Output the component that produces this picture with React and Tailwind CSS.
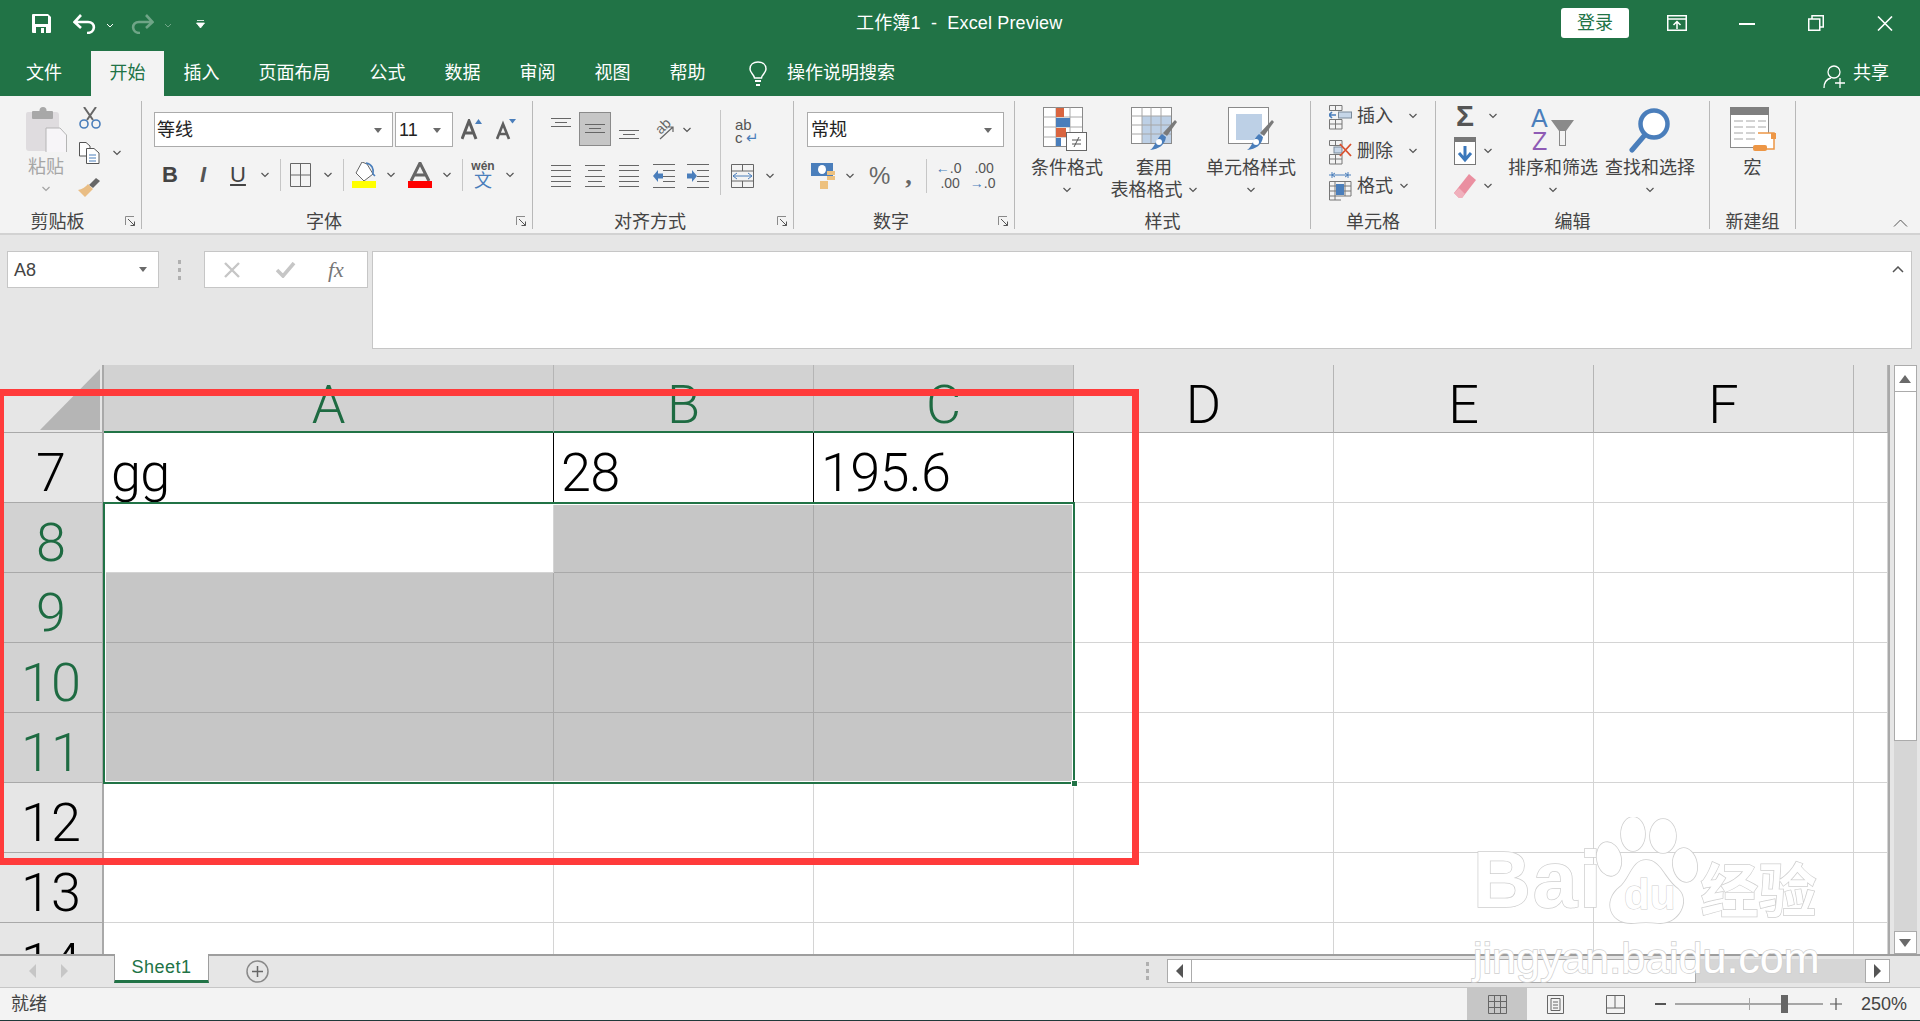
import React from "react";

const Chev = ({ className = "" }) => (
  <svg width="10" height="6" viewBox="0 0 10 6" className={"shrink-0 " + className}>
    <path d="M1.5 1 L5 4.5 L8.5 1" fill="none" stroke="#555" strokeWidth="1.2" />
  </svg>
);

const Caret = ({ className = "" }) => (
  <svg width="10" height="6" viewBox="0 0 10 6" className={className}>
    <path d="M1 0 H9 L5 5 Z" fill="#6a6a6a" />
  </svg>
);

const Sep = ({ className = "" }) => <div className={"w-px bg-[#c6c6c6] shrink-0 " + className} />;

const Launcher = () => (
  <svg width="11" height="11" viewBox="0 0 11 11" className="absolute right-[5px] top-[5px]">
    <path d="M0.5 9 V0.5 H9" fill="none" stroke="#8a8a8a" />
    <path d="M3 3 L9.5 9.5 M5.5 9.5 H9.5 V5.5" fill="none" stroke="#555" />
  </svg>
);

const Group = ({ className, label, launcher, children }) => (
  <div className={"h-[128px] shrink-0 flex flex-col border-r border-[#b8b8b8] " + className}>
    <div className="h-[110px]">{children}</div>
    <div className={"h-[18px] relative text-center text-[18px] leading-[22px] text-[#444] " + (launcher ? "pr-[26px]" : "")}>
      {label}
      {launcher && <Launcher />}
    </div>
  </div>
);

const Lines = ({ y, x }) => (
  <svg width="20" height="22" viewBox="0 0 20 22">
    {y.map((v, i) => (
      <rect key={i} x={x[i]} y={v} width={20 - x[i] * 2} height="1" fill="#666" />
    ))}
  </svg>
);

const AlignV = ({ className = "" }) => (
  <svg width="20" height="10" viewBox="0 0 20 10" className={className}>
    <path d="M0 0.5 H20 M4 4.5 H16 M0 8.5 H20" stroke="#666" />
  </svg>
);

const Indent = ({ flip }) => (
  <svg width="22" height="24" viewBox="0 0 22 24">
    <path d="M0 .5 H22 M10 6.5 H22 M10 12.5 H22 M10 17.5 H22 M0 23.5 H22" stroke="#666" />
    <path d={flip ? "M0 9.5 H5 V6 L10 12 L5 18 V14.5 H0 Z" : "M10 9.5 H5 V6 L0 12 L5 18 V14.5 H10 Z"} fill="#4a7ebb" />
  </svg>
);

const SmallCellIcon = ({ kind }) => (
  <svg width="23" height="28" viewBox="0 0 23 28">
    <g fill="none" stroke="#777">
      <path d="M0.5 3.5 H13 V8.5 H0.5 Z M6.5 3.5 V8.5 M0.5 17.5 H13 V27 H0.5 Z M6.5 17.5 V27 M0.5 22 H13" />
    </g>
    {kind === "ins" && (
      <>
        <rect x="9.5" y="10" width="13" height="6" fill="#c6d6e8" stroke="#7a8a9a" />
        <path d="M0 13 H7 M3 10 L0 13 L3 16" fill="none" stroke="#4a7ebb" strokeWidth="1.6" />
      </>
    )}
    {kind === "del" && (
      <>
        <rect x="5" y="10" width="8" height="6" fill="#c6d6e8" stroke="#7a8a9a" />
        <path d="M11 7 L22 19 M22 7 L11 19" stroke="#d9502e" strokeWidth="1.8" />
      </>
    )}
  </svg>
);

const FormatIcon = () => (
  <svg width="23" height="30" viewBox="0 0 23 30">
    <path d="M0 4 H22 M3 1 V7 M19 1 V7 M3 4 L6 2 M3 4 L6 6 M19 4 L16 2 M19 4 L16 6" fill="none" stroke="#4a7ebb" />
    <path d="M.5 10.5 H22 V25 H.5 Z M.5 15 H22 M.5 20 H22 M6 10.5 V29 M16 10.5 V25 M.5 25 V29 H12" fill="none" stroke="#777" />
    <rect x="7" y="13" width="8" height="11" fill="#4a7ebb" />
  </svg>
);

const TableBrush = ({ cols }) => (
  <svg width="46" height="44" viewBox="0 0 46 44">
    <rect x="0.5" y="0.5" width="40" height="36" fill="#fff" stroke="#8a8a8a" />
    <rect x={cols ? 11 : 8} y={cols ? 9 : 7} width={cols ? 29 : 26} height={cols ? 27 : 26} fill="#bdd0e6" />
    {cols && <path d="M11 .5 V36 M20 .5 V36 M30 .5 V36 M.5 9 H40 M.5 18 H40 M.5 27 H40" stroke="#a6a6a6" fill="none" />}
    <path d="M44 13 L46 15 L36 29 L32 26 Z" fill="#7a7a7a" />
    <path d="M31 27 L35 30 C34 38 28 42 19 43 C24 40 25 32 31 27 Z" fill="#4a7ebb" />
    <circle cx="28" cy="35" r="3" fill="#fff" />
  </svg>
);

const Header = () => (
  <div className="h-[96px] bg-[#217346] text-white shrink-0 flex flex-col">
    <div className="h-[51px] flex relative">
      {/* quick access */}
      <div className="flex items-start pt-[14px] pl-[32px]">
        <svg width="19" height="19" viewBox="0 0 19 19">
          <path d="M0 1 Q0 0 1 0 H16 L19 3 V18 Q19 19 18 19 H1 Q0 19 0 18 Z" fill="#fff" />
          <rect x="3" y="2" width="13" height="8" fill="#217346" />
          <rect x="4" y="13" width="10" height="6" fill="#217346" />
          <rect x="9" y="14" width="3" height="5" fill="#fff" />
        </svg>
        <svg width="23" height="20" viewBox="0 0 23 20" className="ml-[22px]">
          <path d="M2 8 H15 C23 8 23 19 14 19 M8 1 L1.5 8 L8 14" fill="none" stroke="#fff" strokeWidth="2.6" />
        </svg>
        <svg width="8" height="5" viewBox="0 0 8 5" className="ml-[10px] mt-[9px]">
          <path d="M1 1 L4 4 L7 1" fill="none" stroke="#fff" />
        </svg>
        <svg width="23" height="20" viewBox="0 0 23 20" className="ml-[17px]">
          <path d="M21 8 H8 C0 8 0 19 9 19 M15 1 L21.5 8 L15 14" fill="none" stroke="#6fa587" strokeWidth="2.6" />
        </svg>
        <svg width="8" height="5" viewBox="0 0 8 5" className="ml-[10px] mt-[9px]">
          <path d="M1 1 L4 4 L7 1" fill="none" stroke="#6fa587" />
        </svg>
        <svg width="9" height="9" viewBox="0 0 9 9" className="ml-[24px] mt-[6px]">
          <path d="M1 .5 H8 M0.5 3 H8.5 L4.5 8 Z" fill="#fff" stroke="#fff" strokeWidth=".8" />
        </svg>
      </div>
      <div className="absolute left-[856px] top-[11px] text-[18px] leading-[24px] whitespace-pre tracking-[0.15px]">工作簿1  -  Excel Preview</div>
      <div className="ml-auto flex items-start">
        <div className="mt-[8px] w-[68px] h-[30px] bg-white rounded-[3px] text-[#217346] text-[18px] leading-[30px] text-center">登录</div>
        <svg width="20" height="16" viewBox="0 0 20 16" className="ml-[38px] mt-[15px]">
          <path d="M.75 .75 H19.25 V15.25 H.75 Z M.75 4 H19.25" fill="none" stroke="#fff" strokeWidth="1.5" />
          <path d="M10 14 V7 M6.5 10 L10 6.5 L13.5 10" fill="none" stroke="#fff" strokeWidth="1.5" />
        </svg>
        <div className="ml-[52px] mt-[23px] w-[16px] h-[2px] bg-white" />
        <svg width="16" height="16" viewBox="0 0 16 16" className="ml-[53px] mt-[15px]">
          <path d="M.75 4 H11.75 V15.25 H.75 Z M4 4 V.75 H15.25 V12 H11.75" fill="none" stroke="#fff" strokeWidth="1.5" />
        </svg>
        <svg width="16" height="15" viewBox="0 0 16 15" className="ml-[53px] mt-[16px] mr-[27px]">
          <path d="M1 .5 L15 14.5 M15 .5 L1 14.5" stroke="#fff" strokeWidth="1.6" />
        </svg>
      </div>
    </div>
    <div className="h-[45px] flex items-stretch text-[18px] pl-[7px]">
      <div className="px-[19px] mr-[10px] leading-[45px]">文件</div>
      <div className="px-[18.5px] w-[73px] bg-[#f3f3f3] text-[#217346] leading-[45px]">开始</div>
      {["插入", "页面布局", "公式", "数据", "审阅", "视图", "帮助"].map((t) => (
        <div key={t} className="px-[19.5px] leading-[45px]">{t}</div>
      ))}
      <svg width="18" height="26" viewBox="0 0 18 26" className="ml-[24px] mt-[10px]">
        <path d="M5.5 17 C5 13 1 12 1 8 C1 3.5 4.5 1 9 1 C13.5 1 17 3.5 17 8 C17 12 13 13 12.5 17 Z" fill="none" stroke="#fff" strokeWidth="1.5" />
        <path d="M6 20 H12 M7 24 H11" stroke="#fff" strokeWidth="2" />
      </svg>
      <div className="ml-[20px] leading-[45px]">操作说明搜索</div>
      <div className="ml-auto flex mr-[31px]">
        <svg width="23" height="24" viewBox="0 0 23 24" className="mt-[14px]">
          <circle cx="11" cy="7" r="6" fill="none" stroke="#fff" strokeWidth="1.3" />
          <path d="M1 23 C1 17 4 14 8 13 M17 13 V23 M12 18 H22" fill="none" stroke="#fff" strokeWidth="1.3" />
        </svg>
        <div className="ml-[7px] leading-[45px]">共享</div>
      </div>
    </div>
  </div>
);

const Ribbon = () => (
  <div className="h-[139px] shrink-0 bg-[#f3f3f3] border-b-2 border-[#d2d2d2] flex pt-[5px] text-[#444]">
    <Group className="w-[142px]" label="剪贴板" launcher>
      <div className="flex pl-[24px] pt-[6px]">
        <div className="w-[44px] flex flex-col items-center">
          <svg width="41" height="45" viewBox="0 0 41 45">
            <path d="M2 5 H30 Q33 5 33 8 V41 Q33 44 30 44 H3 Q0 44 0 41 V7 Q0 5 2 5 Z" fill="#dfdcdf" />
            <rect x="6" y="4" width="21" height="8" rx="1" fill="#a8a8a8" />
            <circle cx="17" cy="3.5" r="3.5" fill="#a8a8a8" />
            <path d="M20 21 H34 L40.5 28 V48 H20 Z" fill="#f7f5f8" stroke="#b5b5b5" />
          </svg>
          <div className="text-[18px] leading-[22px] mt-[4px] text-[#a6a6a6]">粘贴</div>
          <Chev className="mt-[8px] opacity-50" />
        </div>
        <div className="ml-[9px] flex flex-col">
          <svg width="24" height="22" viewBox="0 0 24 22" className="ml-[1px]">
            <path d="M6 0 L15 13 M18 0 L9 13" stroke="#666" strokeWidth="2" />
            <circle cx="6" cy="17" r="4" fill="none" stroke="#4a7ebb" strokeWidth="1.6" />
            <circle cx="18" cy="17" r="4" fill="none" stroke="#4a7ebb" strokeWidth="1.6" />
          </svg>
          <div className="flex items-center mt-[13px]">
            <svg width="21" height="22" viewBox="0 0 21 22" className="ml-[2px]">
              <path d="M.5 .5 H7 L11 4 V14 H.5 Z" fill="#fff" stroke="#555" />
              <path d="M7.5 6.5 H15 L20 11 V21.5 H7.5 Z" fill="#fff" stroke="#555" />
              <path d="M10 13 H17 M10 16 H17 M10 19 H17" stroke="#4a7ebb" />
            </svg>
            <Chev className="ml-[12px]" />
          </div>
          <svg width="24" height="21" viewBox="0 0 24 21" className="mt-[13px]">
            <path d="M19 1 L23 4 L16 11 L12 8 Z" fill="#666" />
            <path d="M11 7 L16 12 L8 20 L1 13 Q7 12 11 7 Z" fill="#e9bd84" />
          </svg>
        </div>
      </div>
    </Group>

    <Group className="w-[391px]" label="字体" launcher>
      <div className="flex items-center pt-[11px] pl-[12px] h-[46px]">
        <div className="w-[239px] h-[35px] bg-white border border-[#ababab] flex items-center px-[2px] pt-[2px] text-[18px] text-[#222]">
          等线<Caret className="ml-auto mr-[7px]" />
        </div>
        <div className="ml-[2px] w-[58px] h-[35px] bg-white border border-[#ababab] flex items-center px-[3px] pt-[2px] text-[18px] text-[#222]">
          11<Caret className="ml-auto mr-[7px]" />
        </div>
        <svg width="21" height="21" viewBox="0 0 21 21" className="ml-[8px]">
          <path d="M1 20 L8 2 L15 20 M4 14 H12" fill="none" stroke="#5e5e5e" strokeWidth="3" />
          <path d="M14 5 L17.5 0 L21 5 Z" fill="#4a7ebb" />
        </svg>
        <svg width="20" height="21" viewBox="0 0 20 21" className="ml-[14px]">
          <path d="M1 20 L7 5 L13 20 M3.5 15 H10.5" fill="none" stroke="#5e5e5e" strokeWidth="2.6" />
          <path d="M13 0 H20 L16.5 4.5 Z" fill="#4a7ebb" />
        </svg>
      </div>
      <div className="flex items-center mt-[16px] pl-[16px] h-[24px] text-[22px] leading-[24px] text-[#444]">
        <div className="w-[24px] text-center font-bold">B</div>
        <div className="ml-[9px] w-[24px] text-center italic font-bold text-[#555]">I</div>
        <div className="ml-[11px] w-[24px] text-center underline">U</div>
        <Chev className="ml-[10px]" />
        <Sep className="ml-[10px] h-[32px]" />
        <svg width="21" height="24" viewBox="0 0 21 24" className="ml-[9px]">
          <path d="M.5 .5 H20.5 V23.5 H.5 Z M10.5 .5 V23.5 M.5 12 H20.5" fill="none" stroke="#666" />
        </svg>
        <Chev className="ml-[12px]" />
        <Sep className="ml-[10px] h-[32px]" />
        <svg width="24" height="26" viewBox="0 0 24 26" className="ml-[8px]">
          <path d="M10 0 L15 2 L21 12 L12 19 L4 11 Z" fill="#fff" stroke="#666" />
          <path d="M14 1 C20 2 22 7 21 12 L23 14" fill="none" stroke="#4a7ebb" strokeWidth="1.6" />
          <rect x="0" y="19" width="24" height="7" fill="#ffff00" />
        </svg>
        <Chev className="ml-[10px]" />
        <svg width="24" height="26" viewBox="0 0 24 26" className="ml-[12px]">
          <path d="M3 19 L12 1 L21 19 M6 13 H18" fill="none" stroke="#666" strokeWidth="3" />
          <rect x="0" y="19" width="24" height="7" fill="#ff0000" />
        </svg>
        <Chev className="ml-[10px]" />
        <Sep className="ml-[10px] h-[32px]" />
        <div className="ml-[10px] w-[20px] flex flex-col items-center">
          <div className="text-[12px] leading-[12px] font-bold text-[#555]">wén</div>
          <div className="text-[18px] leading-[18px] text-[#4a7ebb]">文</div>
        </div>
        <Chev className="ml-[12px]" />
      </div>
    </Group>

    <Group className="w-[261px]" label="对齐方式" launcher>
      <div className="flex pt-[9px]">
        <div className="w-[187px] shrink-0">
          <div className="flex items-start pl-[18px] h-[38px] pt-[2px]">
            <AlignV className="mt-[6px]" />
            <div className="ml-[8px] w-[32px] h-[34px] bg-[#c6c6c6] border border-[#8a8a8a] flex items-center justify-center">
              <AlignV />
            </div>
            <AlignV className="ml-[8px] mt-[18px]" />
            <div className="ml-[15px] mt-[6px] w-[20px] h-[24px] relative">
              <span className="absolute left-[1px] top-[0px] text-[14px] leading-[16px] text-[#666] -rotate-45 [font-family:'Liberation_Sans',sans-serif]">ab</span>
              <svg width="20" height="24" viewBox="0 0 20 24" className="absolute left-0 top-0">
                <path d="M6 21 L19 9 M14 9 H19 V14" fill="none" stroke="#666" strokeWidth="1.2" />
              </svg>
            </div>
            <Chev className="ml-[8px] mt-[15px]" />
          </div>
          <div className="flex items-center pl-[18px] mt-[16px]">
            <Lines y={[0, 5, 11, 16, 21]} x={[0, 0, 0, 0, 0]} />
            <div className="ml-[14px]"><Lines y={[0, 5, 11, 16, 21]} x={[0, 3, 0, 3, 0]} /></div>
            <div className="ml-[14px]"><Lines y={[0, 5, 11, 16, 21]} x={[0, 0, 0, 0, 0]} /></div>
            <div className="ml-[14px]"><Indent /></div>
            <div className="ml-[12px]"><Indent flip /></div>
          </div>
        </div>
        <Sep className="h-[85px]" />
        <div className="pl-[10px]">
          <div className="h-[38px] pl-[4px] pt-[8px] text-[15px] leading-[13px] text-[#555] [font-family:'Liberation_Sans',sans-serif]">
            <div>ab</div>
            <div>c<span className="text-[#4a7ebb] ml-[3px]">↵</span></div>
          </div>
          <div className="flex items-center mt-[16px]">
            <svg width="23" height="24" viewBox="0 0 23 24">
              <path d="M.5 .5 H22.5 V23.5 H.5 Z M.5 7 H22.5 M.5 17 H22.5 M11.5 .5 V7 M11.5 17 V23.5" fill="none" stroke="#666" />
              <path d="M2 12 H21 M6 9 L2 12 L6 15 M17 9 L21 12 L17 15" fill="none" stroke="#4a7ebb" />
            </svg>
            <Chev className="ml-[11px]" />
          </div>
        </div>
      </div>
    </Group>

    <Group className="w-[221px]" label="数字" launcher>
      <div className="pt-[11px] pl-[13px]">
        <div className="w-[197px] h-[35px] bg-white border border-[#ababab] flex items-center px-[3px] pt-[2px] text-[18px] text-[#222]">
          常规<Caret className="ml-auto mr-[7px]" />
        </div>
      </div>
      <div className="flex items-center pl-[17px] mt-[16px] h-[26px]">
        <svg width="24" height="26" viewBox="0 0 24 26">
          <rect x="0" y="0" width="22" height="13" fill="#4a7ebb" />
          <ellipse cx="11" cy="6.5" rx="4" ry="4.5" fill="#fff" />
          <path d="M16 8 H24 V12 H16 Z M16 13 H24 V17 H16 Z M9 18 H17 V22 H9 Z M9 22 H17 V26 H9 Z" fill="#edc17f" />
        </svg>
        <Chev className="ml-[10px]" />
        <div className="ml-[14px] text-[24px] leading-[26px] text-[#666] [font-family:'Liberation_Sans',sans-serif]">%</div>
        <div className="ml-[15px] text-[26px] leading-[26px] font-bold text-[#666] [font-family:'Liberation_Serif',serif]">,</div>
        <Sep className="ml-[14px] h-[34px]" />
        <div className="ml-[9px] w-[24px] text-[14px] leading-[15px] text-[#555] text-right [font-family:'Liberation_Sans',sans-serif]">
          <div><span className="text-[#4a7ebb] font-bold">←</span>.0</div>
          <div>.00</div>
        </div>
        <div className="ml-[10px] w-[24px] text-[14px] leading-[15px] text-[#555] text-right [font-family:'Liberation_Sans',sans-serif]">
          <div>.00</div>
          <div><span className="text-[#4a7ebb] font-bold">→</span>.0</div>
        </div>
      </div>
    </Group>

    <Group className="w-[296px]" label="样式">
      <div className="flex pt-[6px] pl-[8px] text-[18px] leading-[22px] text-[#444]">
        <div className="w-[88px] flex flex-col items-center">
          <svg width="48" height="44" viewBox="0 0 48 44">
            <rect x=".5" y=".5" width="39" height="39" fill="#fff" stroke="#8a8a8a" />
            <path d="M13 .5 V39 M27 .5 V39 M.5 10 H39 M.5 20 H39 M.5 30 H39" stroke="#aaa" fill="none" />
            <rect x="13" y="1" width="8" height="9" fill="#d96540" />
            <rect x="13" y="11" width="14" height="9" fill="#4a7ebb" />
            <rect x="13" y="21" width="10" height="9" fill="#d96540" />
            <rect x="13" y="31" width="5" height="8" fill="#4a7ebb" />
            <rect x="23.5" y="25.5" width="20" height="18" fill="#fff" stroke="#666" />
            <path d="M29 33 H38 M29 37 H38 M36 30 L31 40" stroke="#555" />
          </svg>
          <div className="mt-[6px]">条件格式</div>
          <div className="h-[22px] flex items-center"><Chev /></div>
        </div>
        <div className="w-[86px] flex flex-col items-center">
          <TableBrush cols />
          <div className="mt-[6px]">套用</div>
          <div className="flex items-center whitespace-nowrap">表格格式<Chev className="ml-[5px]" /></div>
        </div>
        <div className="ml-[6px] w-[96px] flex flex-col items-center">
          <TableBrush />
          <div className="mt-[6px] whitespace-nowrap">单元格样式</div>
          <div className="h-[22px] flex items-center"><Chev /></div>
        </div>
      </div>
    </Group>

    <Group className="w-[125px]" label="单元格">
      <div className="pl-[18px] text-[18px] leading-[30px] text-[#444]">
        <div className="flex items-center h-[30px]">
          <SmallCellIcon kind="ins" />
          <span className="ml-[5px]">插入</span>
          <Chev className="ml-[15px]" />
        </div>
        <div className="flex items-center h-[30px] mt-[5px]">
          <SmallCellIcon kind="del" />
          <span className="ml-[5px]">删除</span>
          <Chev className="ml-[15px]" />
        </div>
        <div className="flex items-center h-[30px] mt-[5px]">
          <FormatIcon />
          <span className="ml-[5px]">格式</span>
          <Chev className="ml-[6px]" />
        </div>
      </div>
    </Group>

    <Group className="w-[274px]" label="编辑">
      <div className="flex text-[18px] leading-[22px] text-[#444]">
        <div className="pl-[18px] w-[70px]">
          <div className="flex items-center h-[30px]">
            <div className="w-[22px] text-center text-[30px] leading-[30px] font-bold text-[#555] [font-family:'Liberation_Sans',sans-serif]">Σ</div>
            <Chev className="ml-[12px]" />
          </div>
          <div className="flex items-center h-[30px] mt-[5px]">
            <svg width="22" height="28" viewBox="0 0 22 28">
              <rect x=".5" y=".5" width="21" height="27" fill="#fff" stroke="#777" />
              <rect x="0" y="0" width="22" height="5" fill="#777" />
              <path d="M11 9 V22 M5 16 L11 23 L17 16" fill="none" stroke="#3a77bb" strokeWidth="3" />
            </svg>
            <Chev className="ml-[7px]" />
          </div>
          <div className="flex items-center h-[30px] mt-[5px]">
            <svg width="22" height="24" viewBox="0 0 22 24">
              <path d="M15 0 L22 6 L8 24 H5 L0 19 Z" fill="#ea8fa0" />
              <path d="M0 19 L5 14 L11 20 L8 24 H5 Z" fill="#f0b0bc" />
            </svg>
            <Chev className="ml-[7px]" />
          </div>
        </div>
        <div className="w-[94px] pt-[6px] flex flex-col items-center">
          <div className="w-[44px] h-[46px] shrink-0 relative text-[25px] leading-[23px] [font-family:'Liberation_Sans',sans-serif]">
            <div className="text-[#4a7ebb]">A</div>
            <div className="text-[#8e5bb5] ml-[1px]">Z</div>
            <svg width="44" height="46" viewBox="0 0 44 46" className="absolute left-0 top-0">
              <path d="M20 13 H43 L35 24 V39 H28 V24 Z" fill="#8a8a8a" />
              <path d="M29 24 H34 V38 H29 Z" fill="#f3f3f3" />
            </svg>
          </div>
          <div className="mt-[4px] whitespace-nowrap">排序和筛选</div>
          <div className="h-[22px] flex items-center"><Chev /></div>
        </div>
        <div className="ml-[3px] w-[94px] pt-[6px] flex flex-col items-center">
          <svg width="42" height="46" viewBox="0 0 42 46" className="shrink-0">
            <circle cx="25" cy="17" r="13.5" fill="#fff" stroke="#4a7ebb" strokeWidth="4.5" />
            <path d="M15 29 L3 43" stroke="#4a7ebb" strokeWidth="5" strokeLinecap="round" />
          </svg>
          <div className="mt-[4px] whitespace-nowrap">查找和选择</div>
          <div className="h-[22px] flex items-center"><Chev /></div>
        </div>
      </div>
    </Group>

    <Group className="w-[86px]" label="新建组">
      <div className="pt-[6px] flex flex-col items-center text-[18px] leading-[22px]">
        <svg width="46" height="44" viewBox="0 0 46 44">
          <rect x=".5" y=".5" width="38" height="40" fill="#fff" stroke="#8a8a8a" />
          <rect x="0" y="0" width="39" height="8" fill="#7f7f7f" />
          <path d="M4 14 H13 M16 14 H25 M28 14 H36 M4 20 H13 M16 20 H25 M28 20 H36 M4 26 H13 M16 26 H25 M4 32 H13 M16 32 H25" stroke="#a6a6a6" />
          <path d="M28 26 H44 V42 H25" fill="#fff" stroke="#ed9645" strokeWidth="1.5" />
          <rect x="23" y="38" width="14" height="6" rx="2" fill="#ed9645" />
          <rect x="41" y="26" width="5" height="6" fill="#ed9645" />
        </svg>
        <div className="mt-[6px]">宏</div>
      </div>
    </Group>

    <div className="flex-1 flex justify-end items-end pr-[12px] pb-[6px]">
      <svg width="15" height="8" viewBox="0 0 15 8">
        <path d="M1 7.5 L7.5 1 L14 7.5" fill="none" stroke="#555" />
      </svg>
    </div>
  </div>
);

const FormulaBar = () => (
  <div className="h-[130px] shrink-0 bg-[#e6e6e6] flex items-start pt-[16px] pl-[7px] text-[18px] text-[#444]">
    <div className="w-[152px] h-[37px] bg-white border border-[#c6c6c6] flex items-center pl-[6px] pr-[10px] pt-[1px]">
      A8<Caret className="ml-auto" />
    </div>
    <div className="ml-[19px] mt-[9px] flex flex-col gap-[4px]">
      <div className="w-[3px] h-[4px] bg-[#b0b0b0]" />
      <div className="w-[3px] h-[4px] bg-[#b0b0b0]" />
      <div className="w-[3px] h-[4px] bg-[#b0b0b0]" />
    </div>
    <div className="ml-[23px] w-[164px] h-[37px] bg-white border border-[#c6c6c6] flex items-center">
      <svg width="18" height="18" viewBox="0 0 18 18" className="ml-[18px]">
        <path d="M2 2 L16 16 M16 2 L2 16" stroke="#c6c6c6" strokeWidth="2.4" />
      </svg>
      <svg width="20" height="16" viewBox="0 0 20 16" className="ml-[35px]">
        <path d="M1 8 L7 14 L18 1" fill="none" stroke="#c6c6c6" strokeWidth="3.6" />
      </svg>
      <div className="ml-[32px] text-[22px] italic text-[#777] [font-family:'Liberation_Serif',serif]">fx</div>
    </div>
    <div className="ml-[4px] w-[1540px] h-[98px] bg-white border border-[#c6c6c6] flex justify-end pt-[14px] pr-[7px]">
      <svg width="12" height="7" viewBox="0 0 12 7">
        <path d="M1 6 L6 1 L11 6" fill="none" stroke="#555" strokeWidth="1.5" />
      </svg>
    </div>
  </div>
);

const colClass = ["w-[450px]", "w-[260px]", "w-[260px]", "w-[260px]", "w-[260px]", "w-[260px]", "flex-1"];
const bigText = "[font-family:Roboto,sans-serif] font-light text-[54px]";

const Row = ({ n, cells = {}, selected }) => (
  <div className="h-[70px] flex shrink-0">
    <div className={"w-[104px] shrink-0 border-b border-r-2 text-center leading-[70px] pt-[5px] " + bigText + (selected ? " bg-[#d2d2d2] text-[#1e6b42] border-[#a9a9a9]" : " bg-[#e6e6e6] text-black border-[#a9a9a9]")}>
      {n}
    </div>
    {colClass.map((w, i) => {
      const gray = selected && i < 3 && !(n === 8 && i === 0);
      const black = n === 7 && i < 3;
      return (
        <div
          key={i}
          className={
            "shrink-0 border-r border-b pl-[7px] leading-[70px] text-black pt-[5px] tracking-[-0.7px] " + bigText + " " + w + " " +
            (gray ? "bg-[#c6c6c6] border-[#a9a9a9]" : black ? "bg-white border-r-black border-b-[#d4d4d4]" : "bg-white border-[#d4d4d4]")
          }
        >
          {cells[i]}
        </div>
      );
    })}
  </div>
);

const Sheet = () => (
  <div className="h-[589px] shrink-0 flex bg-[#e6e6e6]">
    <div className="w-[1890px] shrink-0 border-r-2 border-[#a9a9a9] relative overflow-hidden">
      <div className="h-[68px] flex">
        <div className="w-[104px] h-[68px] bg-[#e6e6e6] border-b border-r-2 border-[#a9a9a9] shrink-0">
          <svg width="102" height="67" viewBox="0 0 102 67">
            <path d="M100 4 V65 H40 Z" fill="#b5b5b5" />
          </svg>
        </div>
        {["A", "B", "C", "D", "E", "F", ""].map((c, i) => (
          <div
            key={i}
            className={
              "border-r text-center leading-[68px] pt-[6px] shrink-0 " + bigText + " " + colClass[i] + " " +
              (i < 3 ? "bg-[#d2d2d2] text-[#1e6b42] border-r-[#b5b5b5] border-b-2 border-b-[#217346]" : "bg-[#e6e6e6] text-black border-r-[#b5b5b5] border-b border-b-[#a9a9a9]")
            }
          >
            {c}
          </div>
        ))}
      </div>
      <Row n={7} cells={{ 0: "gg", 1: "28", 2: "195.6" }} />
      <Row n={8} selected />
      <Row n={9} selected />
      <Row n={10} selected />
      <Row n={11} selected />
      <Row n={12} />
      <Row n={13} />
      <Row n={14} />
      {/* selection outline */}
      <div className="absolute left-[103px] top-[137px] w-[972px] h-[282px] border-2 border-[#217346] pointer-events-none [box-shadow:inset_0_0_0_1px_#fff]" />
      <div className="absolute left-[1071px] top-[415px] w-[7px] h-[7px] bg-[#217346] border border-white" />
    </div>
    <div className="flex-1 flex flex-col items-center">
      <div className="w-[23px] h-[27px] bg-white border border-[#ababab] flex items-center justify-center">
        <svg width="12" height="8" viewBox="0 0 12 8"><path d="M6 0 L12 8 H0 Z" fill="#6a6a6a" /></svg>
      </div>
      <div className="w-[23px] flex-1 bg-[#d6d6d6] flex flex-col">
        <div className="h-[349px] bg-white border-x border-b border-[#ababab]" />
      </div>
      <div className="w-[23px] h-[23px] bg-white border border-[#ababab] flex items-center justify-center">
        <svg width="12" height="8" viewBox="0 0 12 8"><path d="M0 0 H12 L6 8 Z" fill="#6a6a6a" /></svg>
      </div>
    </div>
  </div>
);

const SheetBar = () => (
  <div className="h-[33px] shrink-0 bg-[#e6e6e6] border-t-2 border-[#9e9e9e] flex items-start">
    <svg width="7" height="14" viewBox="0 0 7 14" className="ml-[29px] mt-[8px]"><path d="M7 0 V14 L0 7 Z" fill="#c6c6c6" /></svg>
    <svg width="7" height="14" viewBox="0 0 7 14" className="ml-[25px] mt-[8px]"><path d="M0 0 V14 L7 7 Z" fill="#c6c6c6" /></svg>
    <div className="ml-[46px] w-[95px] h-[29px] bg-white border-x border-[#9e9e9e] border-b-[3px] border-b-[#217346] -mt-[2px] text-[#217346] text-[18px] leading-[26px] text-center tracking-[0.5px]">Sheet1</div>
    <svg width="23" height="23" viewBox="0 0 23 23" className="ml-[37px] mt-[4px]">
      <circle cx="11.5" cy="11.5" r="10.5" fill="none" stroke="#8a8a8a" strokeWidth="1.5" />
      <path d="M6 11.5 H17 M11.5 6 V17" stroke="#666" strokeWidth="1.5" />
    </svg>
    <div className="ml-[877px] mt-[6px] flex flex-col gap-[3px]">
      <div className="w-[3px] h-[4px] bg-[#b0b0b0]" />
      <div className="w-[3px] h-[4px] bg-[#b0b0b0]" />
      <div className="w-[3px] h-[4px] bg-[#b0b0b0]" />
    </div>
    <div className="ml-[18px] mt-[3px] w-[723px] h-[24px] flex bg-[#d6d6d6]">
      <div className="w-[25px] bg-white border border-[#ababab] flex items-center justify-center shrink-0">
        <svg width="7" height="14" viewBox="0 0 7 14"><path d="M7 0 V14 L0 7 Z" fill="#555" /></svg>
      </div>
      <div className="w-[504px] bg-white border-y border-r border-[#ababab]" />
      <div className="flex-1" />
      <div className="w-[25px] bg-white border border-[#ababab] flex items-center justify-center shrink-0">
        <svg width="7" height="14" viewBox="0 0 7 14"><path d="M0 0 V14 L7 7 Z" fill="#555" /></svg>
      </div>
    </div>
  </div>
);

const StatusBar = () => (
  <div className="h-[34px] shrink-0 bg-[#f3f3f3] border-t border-[#c6c6c6] border-b border-b-[#1f3a3a] flex items-stretch text-[#444] text-[18px]">
    <div className="pl-[11px] leading-[32px]">就绪</div>
    <div className="ml-auto flex items-center">
      <div className="w-[60px] self-stretch bg-[#c6c6c6] flex items-center justify-center">
        <svg width="19" height="19" viewBox="0 0 19 19">
          <path d="M.5 .5 H18.5 V18.5 H.5 Z M6.5 .5 V18.5 M12.5 .5 V18.5 M.5 6.5 H18.5 M.5 12.5 H18.5" fill="none" stroke="#666" />
        </svg>
      </div>
      <svg width="19" height="19" viewBox="0 0 19 19" className="ml-[19px]">
        <path d="M1.5 .5 H17.5 V18.5 H1.5 Z M5 3.5 H14 V15.5 H5 Z M7 7 H12 M7 10 H12 M7 13 H12" fill="none" stroke="#666" />
      </svg>
      <svg width="19" height="19" viewBox="0 0 19 19" className="ml-[41px]">
        <path d="M.5 .5 H18.5 V18.5 H.5 Z M9 .5 V13 M.5 13 H18.5" fill="none" stroke="#666" />
      </svg>
      <div className="ml-[30px] w-[11px] h-[2px] bg-[#555]" />
      <div className="ml-[9px] w-[148px] h-[2px] bg-[#a6a6a6] relative">
        <div className="absolute left-[74px] -top-[5px] w-px h-[12px] bg-[#a6a6a6]" />
        <div className="absolute left-[106px] -top-[8px] w-[7px] h-[18px] bg-[#666]" />
      </div>
      <svg width="12" height="12" viewBox="0 0 12 12" className="ml-[7px]">
        <path d="M0 6 H12 M6 0 V12" stroke="#555" strokeWidth="1.2" />
      </svg>
      <div className="ml-[19px] mr-[9px] w-[50px] whitespace-nowrap">250%</div>
    </div>
  </div>
);

const Watermark = () => (
  <div className="absolute left-[1473px] top-[817px] w-[345px] h-[160px] pointer-events-none text-white [-webkit-text-stroke:1.5px_#cfcfcf] [paint-order:stroke_fill] [font-family:'Liberation_Sans','Noto_Sans_CJK_SC',sans-serif]">
    <div className="flex items-end h-[108px]">
      <div className="text-[80px] leading-[90px] font-bold tracking-[2px]">Bai</div>
      <svg width="105" height="108" viewBox="0 0 105 108" className="shrink-0 -ml-[8px]">
        <g fill="#fff" stroke="#cfcfcf" strokeWidth="1.6">
          <ellipse cx="37" cy="17" rx="12" ry="17" />
          <ellipse cx="67" cy="19" rx="13" ry="17" />
          <ellipse cx="13" cy="42" rx="12" ry="17" transform="rotate(-12 13 42)" />
          <ellipse cx="89" cy="48" rx="12" ry="17" transform="rotate(-10 89 48)" />
          <path d="M50 43 C65 43 68 62 82 72 C95 84 82 108 62 106 C54 105 46 105 38 106 C14 108 6 84 24 70 C34 62 36 43 50 43 Z" />
        </g>
        <text x="28" y="92" fontSize="42" fontWeight="700" fill="#fff" stroke="#cfcfcf" fontFamily="Liberation Sans">du</text>
      </svg>
      <div className="text-[58px] leading-[66px] font-bold whitespace-nowrap">经验</div>
    </div>
    <div className="mt-[8px] text-[43px] leading-[50px] whitespace-nowrap">jingyan.baidu.com</div>
  </div>
);

export default function App() {
  return (
    <div className="w-[1920px] h-[1021px] relative overflow-hidden flex flex-col bg-white [font-family:'Liberation_Sans','Noto_Sans_CJK_SC',sans-serif]">
      <Header />
      <Ribbon />
      <FormulaBar />
      <Sheet />
      <SheetBar />
      <StatusBar />
      <Watermark />
      {/* red annotation box */}
      <div className="absolute -left-[3px] top-[389px] w-[1142px] h-[476px] border-[7px] border-[#ff3b3b] z-10 pointer-events-none" />
    </div>
  );
}
